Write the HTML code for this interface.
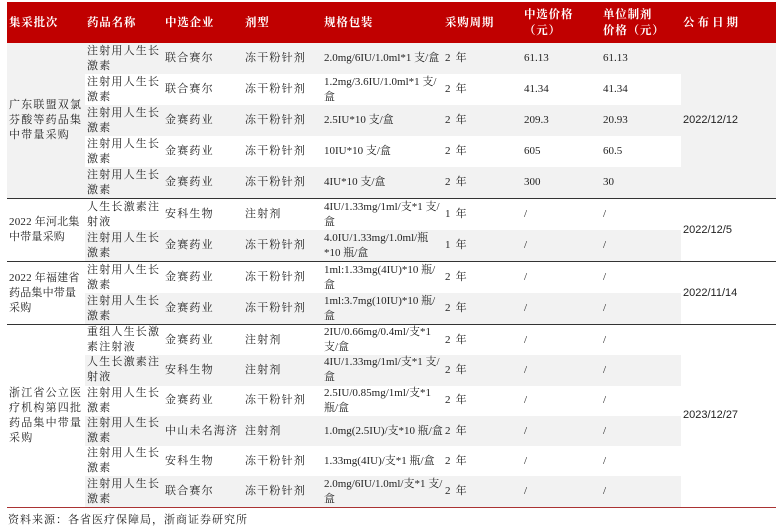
<!DOCTYPE html>
<html><head><meta charset="utf-8"><style>
body{margin:0;background:#fff;width:778px;height:527px;overflow:hidden;font-family:"Liberation Serif","Noto Serif CJK SC",serif;color:#222;}
table{position:absolute;left:7px;top:2px;border-collapse:collapse;table-layout:fixed;width:769px;font-size:11px;}
td,th{padding:0 0 0 2px;vertical-align:middle;line-height:15px;overflow:hidden;white-space:normal;}
th{background:#c00000;color:#fff;font-weight:bold;text-align:left;height:41px;font-size:11.5px;line-height:16px;letter-spacing:0.8px;}
tr.r td{height:31px;}
tr.s td{height:30.3px;}
tr.g td.b{background:#f2f2f2;}
td.m1{background:#f2f2f2;}
tr.top td{border-top:1.5px solid #333;}
tr.last td,td.lastd{border-bottom:1.5px solid #a33;}
td.c{letter-spacing:1.2px;}
td.y{letter-spacing:0.2px;}
.d{font-family:"Liberation Sans",sans-serif;font-size:11px;}
.src{position:absolute;left:8px;top:511px;font-size:11px;letter-spacing:1px;}
</style></head><body>
<table>
<colgroup><col style="width:78px"><col style="width:78px"><col style="width:80px"><col style="width:79px"><col style="width:121px"><col style="width:79px"><col style="width:79px"><col style="width:80px"><col style="width:95px"></colgroup>
<tr><th>集采批次</th><th>药品名称</th><th>中选企业</th><th>剂型</th><th>规格包装</th><th>采购周期</th><th>中选价格<br>（元）</th><th>单位制剂<br>价格（元）</th><th style="letter-spacing:3px">公布日期</th></tr>
<tr class="r g"><td class="m1 c" rowspan="5">广东联盟双氯芬酸等药品集中带量采购</td><td class="b c">注射用人生长激素</td><td class="b c">联合赛尔</td><td class="b c">冻干粉针剂</td><td class="b">2.0mg/6IU/1.0ml*1 支/盒</td><td class="b c">2 年</td><td class="b">61.13</td><td class="b">61.13</td><td class="m1 d" rowspan="5">2022/12/12</td></tr>
<tr class="r"><td class="c">注射用人生长激素</td><td class="c">联合赛尔</td><td class="c">冻干粉针剂</td><td>1.2mg/3.6IU/1.0ml*1 支/盒</td><td class="c">2 年</td><td>41.34</td><td>41.34</td></tr>
<tr class="r g"><td class="b c">注射用人生长激素</td><td class="b c">金赛药业</td><td class="b c">冻干粉针剂</td><td class="b">2.5IU*10 支/盒</td><td class="b c">2 年</td><td class="b">209.3</td><td class="b">20.93</td></tr>
<tr class="r"><td class="c">注射用人生长激素</td><td class="c">金赛药业</td><td class="c">冻干粉针剂</td><td>10IU*10 支/盒</td><td class="c">2 年</td><td>605</td><td>60.5</td></tr>
<tr class="r g"><td class="b c">注射用人生长激素</td><td class="b c">金赛药业</td><td class="b c">冻干粉针剂</td><td class="b">4IU*10 支/盒</td><td class="b c">2 年</td><td class="b">300</td><td class="b">30</td></tr>
<tr class="r top"><td class="y" rowspan="2">2022 年河北集中带量采购</td><td class="c">人生长激素注射液</td><td class="c">安科生物</td><td class="c">注射剂</td><td>4IU/1.33mg/1ml/支*1 支/盒</td><td class="c">1 年</td><td>/</td><td>/</td><td class="d" rowspan="2">2022/12/5</td></tr>
<tr class="r g"><td class="b c">注射用人生长激素</td><td class="b c">金赛药业</td><td class="b c">冻干粉针剂</td><td class="b">4.0IU/1.33mg/1.0ml/瓶*10 瓶/盒</td><td class="b c">1 年</td><td class="b">/</td><td class="b">/</td></tr>
<tr class="r top"><td class="y" rowspan="2">2022 年福建省药品集中带量采购</td><td class="c">注射用人生长激素</td><td class="c">金赛药业</td><td class="c">冻干粉针剂</td><td>1ml:1.33mg(4IU)*10 瓶/盒</td><td class="c">2 年</td><td>/</td><td>/</td><td class="d" rowspan="2">2022/11/14</td></tr>
<tr class="r g"><td class="b c">注射用人生长激素</td><td class="b c">金赛药业</td><td class="b c">冻干粉针剂</td><td class="b">1ml:3.7mg(10IU)*10 瓶/盒</td><td class="b c">2 年</td><td class="b">/</td><td class="b">/</td></tr>
<tr class="s top"><td class="c lastd" rowspan="6">浙江省公立医疗机构第四批药品集中带量采购</td><td class="c">重组人生长激素注射液</td><td class="c">金赛药业</td><td class="c">注射剂</td><td>2IU/0.66mg/0.4ml/支*1 支/盒</td><td class="c">2 年</td><td>/</td><td>/</td><td class="d lastd" rowspan="6">2023/12/27</td></tr>
<tr class="s g"><td class="b c">人生长激素注射液</td><td class="b c">安科生物</td><td class="b c">注射剂</td><td class="b">4IU/1.33mg/1ml/支*1 支/盒</td><td class="b c">2 年</td><td class="b">/</td><td class="b">/</td></tr>
<tr class="s"><td class="c">注射用人生长激素</td><td class="c">金赛药业</td><td class="c">冻干粉针剂</td><td>2.5IU/0.85mg/1ml/支*1 瓶/盒</td><td class="c">2 年</td><td>/</td><td>/</td></tr>
<tr class="s g"><td class="b c">注射用人生长激素</td><td class="b c">中山未名海济</td><td class="b c">注射剂</td><td class="b">1.0mg(2.5IU)/支*10 瓶/盒</td><td class="b c">2 年</td><td class="b">/</td><td class="b">/</td></tr>
<tr class="s"><td class="c">注射用人生长激素</td><td class="c">安科生物</td><td class="c">冻干粉针剂</td><td>1.33mg(4IU)/支*1 瓶/盒</td><td class="c">2 年</td><td>/</td><td>/</td></tr>
<tr class="s g last"><td class="b c">注射用人生长激素</td><td class="b c">联合赛尔</td><td class="b c">冻干粉针剂</td><td class="b">2.0mg/6IU/1.0ml/支*1 支/盒</td><td class="b c">2 年</td><td class="b">/</td><td class="b">/</td></tr>
</table>
<div class="src">资料来源：各省医疗保障局，浙商证券研究所</div>
</body></html>
